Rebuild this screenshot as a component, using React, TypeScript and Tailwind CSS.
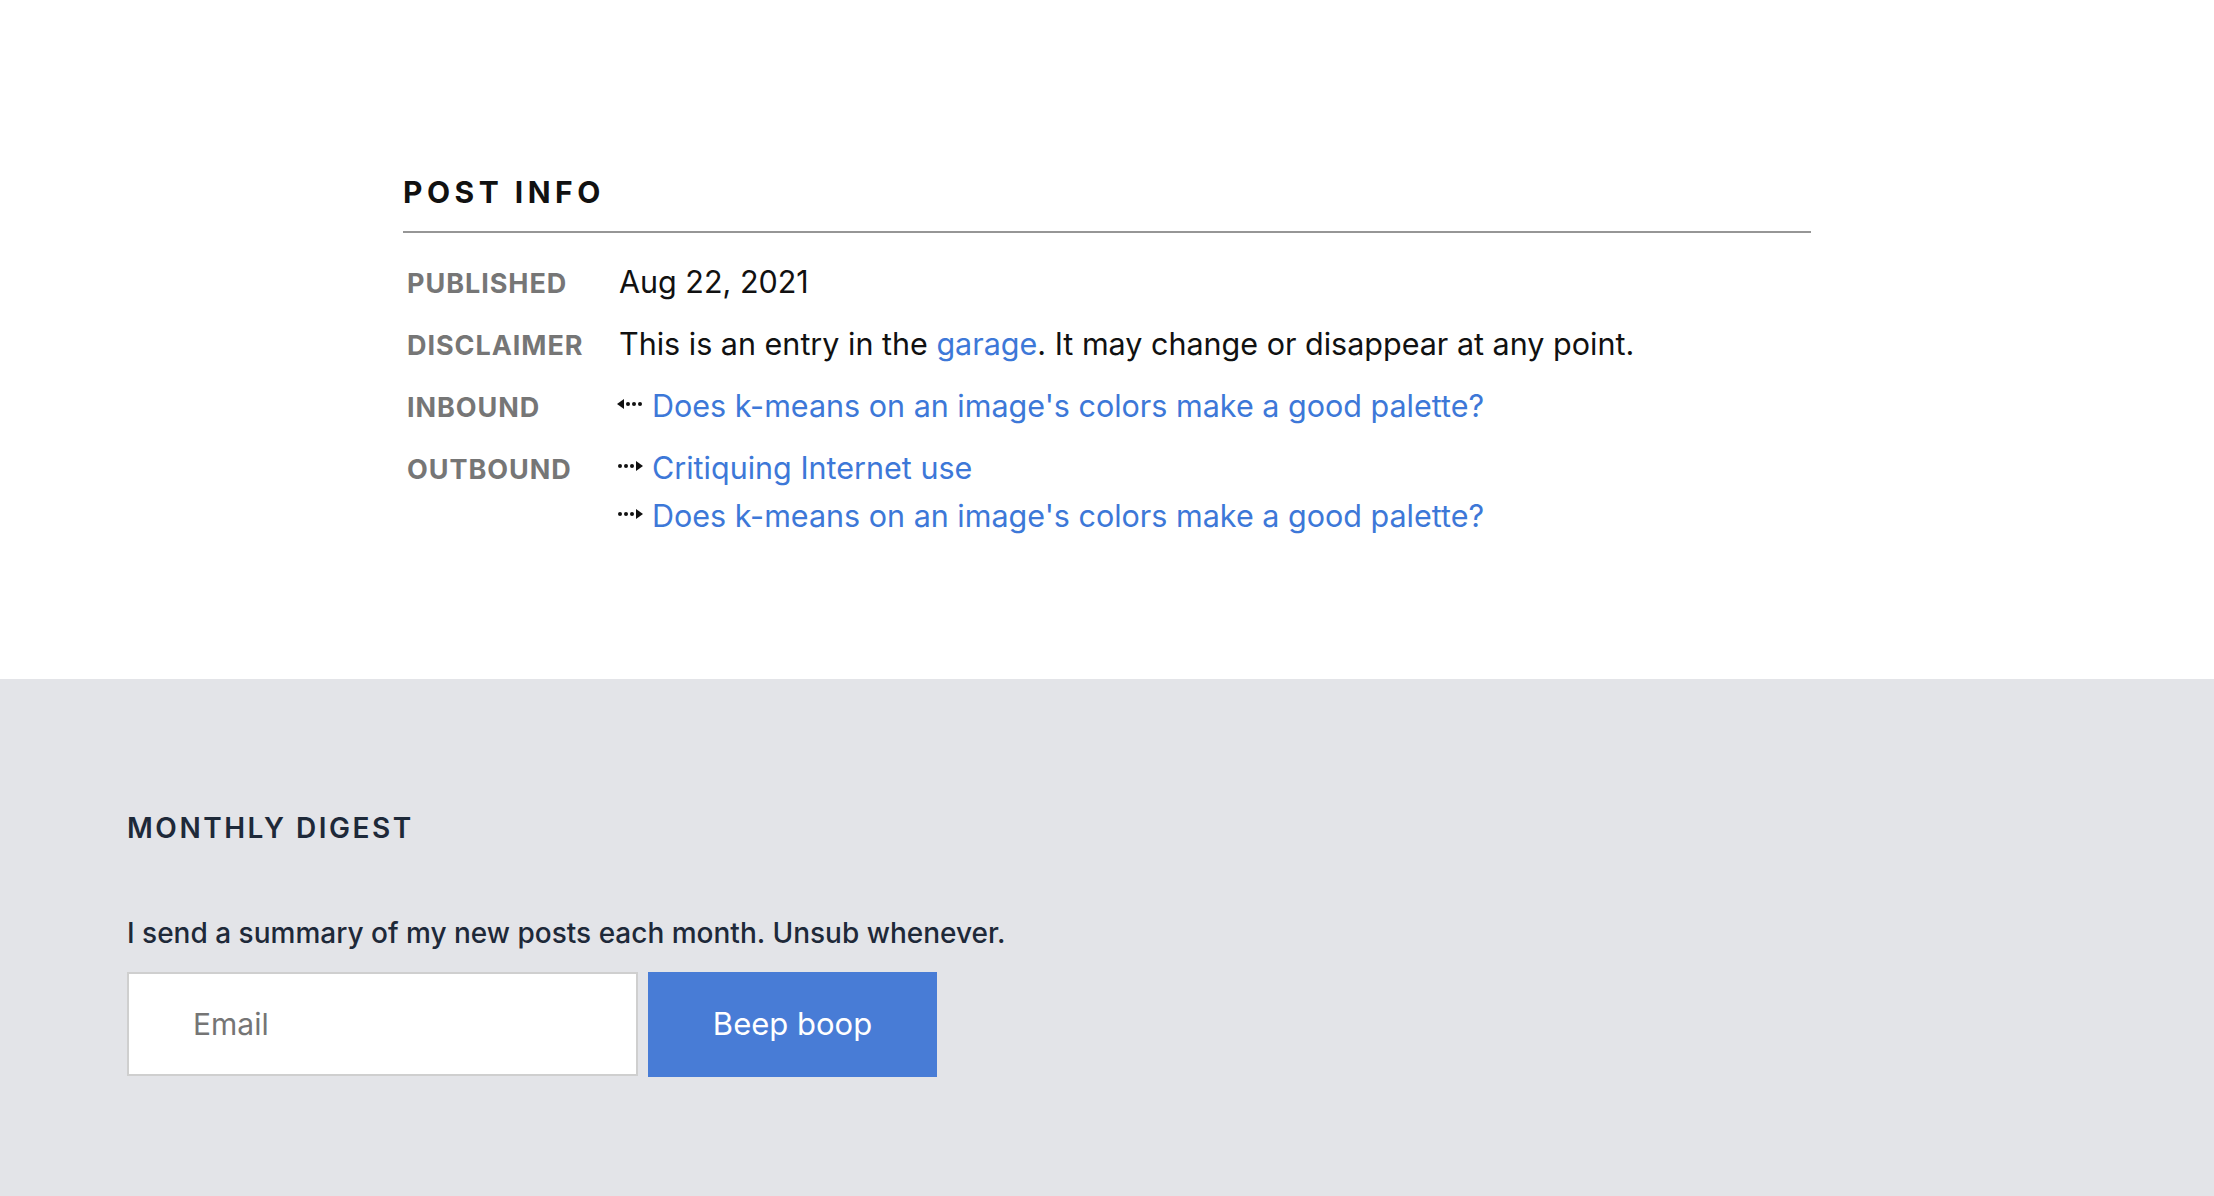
import React from 'react';

type LinkItem = { title: string; dir: 'in' | 'out' };

const ArrowIn = () => (
  <svg width="26" height="12" viewBox="0 0 26 12" className="mr-[9px] inline-block align-[0.22em]">
    <path d="M0 6 L7 1 L7 11 Z" fill="#111" />
    <circle cx="11" cy="6" r="2" fill="#111" />
    <circle cx="17" cy="6" r="2" fill="#111" />
    <circle cx="23" cy="6" r="2" fill="#111" />
  </svg>
);

const ArrowOut = () => (
  <svg width="26" height="12" viewBox="0 0 26 12" className="mr-[9px] inline-block align-[0.22em]">
    <circle cx="3" cy="6" r="2" fill="#111" />
    <circle cx="9" cy="6" r="2" fill="#111" />
    <circle cx="15" cy="6" r="2" fill="#111" />
    <path d="M19 1 L26 6 L19 11 Z" fill="#111" />
  </svg>
);

const PostLink: React.FC<LinkItem> = ({ title, dir }) => (
  <div className="-ml-[2px]">
    {dir === 'in' ? <ArrowIn /> : <ArrowOut />}
    <a href="#" className="text-[#3d78d8] hover:underline">{title}</a>
  </div>
);

const Label: React.FC<{ children: React.ReactNode }> = ({ children }) => (
  <div className="pl-[4px] text-[27px] leading-[24px] font-bold uppercase tracking-[0.035em] text-[#767676]">
    {children}
  </div>
);

const App: React.FC = () => {
  return (
    <div className="min-h-screen bg-white font-['Inter',sans-serif]">
      <section className="h-[679px] bg-white pt-[174px]">
        <div className="mx-auto w-[1408px]">
          <h2 className="text-[30px] leading-[36px] font-bold tracking-[0.15em] text-[#111]">POST INFO</h2>
          <div className="mt-[21px] h-[2px] bg-[#969696]" />
          <div className="mt-[25px] grid grid-cols-[216px_1fr] items-baseline gap-y-[14px] text-[30.5px] leading-[48px] text-[#111]">
            <Label>Published</Label>
            <div>Aug 22, 2021</div>

            <Label>Disclaimer</Label>
            <div>
              This is an entry in the{' '}
              <a href="#" className="text-[#3d78d8] hover:underline">garage</a>. It may change or disappear at any point.
            </div>

            <Label>Inbound</Label>
            <div>
              <PostLink dir="in" title="Does k-means on an image's colors make a good palette?" />
            </div>

            <Label>Outbound</Label>
            <div>
              <PostLink dir="out" title="Critiquing Internet use" />
              <PostLink dir="out" title="Does k-means on an image's colors make a good palette?" />
            </div>
          </div>
        </div>
      </section>

      <section className="bg-[#e3e4e8] pt-[131px] pb-[160px] pl-[127px]">
        <h3 className="text-[28px] leading-[36px] font-semibold tracking-[0.09em] text-gray-800">MONTHLY DIGEST</h3>
        <p className="mt-[69px] text-[28px] leading-[36px] font-medium text-gray-800">
          I send a summary of my new posts each month. Unsub whenever.
        </p>
        <form className="mt-[21px] flex gap-[10px]" onSubmit={(e) => e.preventDefault()}>
          <input
            type="email"
            placeholder="Email"
            className="h-[104px] w-[511px] border-2 border-[#cfcfcf] bg-white pl-[64px] text-[30px] text-[#333] placeholder:text-[#757575] outline-none"
          />
          <button type="submit" className="h-[105px] w-[289px] bg-[#487cd6] text-[31px] text-white">
            Beep boop
          </button>
        </form>
      </section>
    </div>
  );
};

export default App;
